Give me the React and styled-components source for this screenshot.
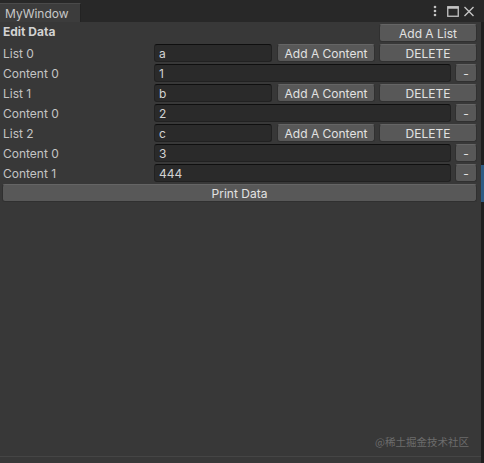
import React from 'react'
import styled, { createGlobalStyle } from 'styled-components'

const GlobalStyle = createGlobalStyle`
    html, body {
        margin: 0;
        padding: 0;
        background: #282828;
    }
    body {
        font-family: Inter, "Noto Sans", "Noto Sans CJK SC", sans-serif;
        font-size: 12px;
    }
`

const Window = styled.div`
    position: relative;
    width: 484px;
    height: 463px;
    display: flex;
    flex-direction: column;
    background: #383838;
    overflow: hidden;
`

const TabBar = styled.div`
    height: 22px;
    display: flex;
    align-items: flex-end;
    background: #282828;
`

const Tab = styled.div`
    width: 81px;
    height: 19px;
    box-sizing: border-box;
    padding: 0 5px;
    display: flex;
    align-items: center;
    background: #3c3c3c;
    border-top: 1px solid #4a4a4a;
    border-right: 1px solid #232323;
    color: #c8c8c8;
    font-size: 12px;
`

const TabIcons = styled.div`
    margin-left: auto;
    height: 22px;
    display: flex;
    align-items: center;
    padding-right: 9px;
    color: #c4c4c4;

    svg + svg {
        margin-left: ${p => p.$gap || 4}px;
    }
    svg:nth-child(2) {
        margin-left: 10px;
    }
`

const Body = styled.div`
    flex: 1;
    display: flex;
`

const Content = styled.div`
    flex: 1;
    padding: 2px 4px 0 2px;
    display: flex;
    flex-direction: column;
    gap: 2px;
    border-bottom: 1px solid #454545;
    margin-bottom: 6px;
`

const EdgeStrip = styled.div`
    width: 3px;
    background: #1f1f1f;
    padding-top: 143px;
`

const EdgeMark = styled.div`
    height: 37px;
    background: #2d5b84;
`

const Row = styled.div`
    height: 18px;
    display: flex;
    align-items: center;
    gap: 4px;
`

const Label = styled.div`
    width: 147px;
    padding-left: 1px;
    color: ${p => (p.$bold ? '#d2d2d2' : '#c4c4c4')};
    font-weight: ${p => (p.$bold ? 700 : 400)};
    white-space: nowrap;
    margin-top: ${p => (p.$bold ? '-3px' : '0')};
`

const Spacer = styled.div`
    flex: 1;
`

const Field = styled.div`
    flex: 1;
    height: 18px;
    box-sizing: border-box;
    display: flex;
    align-items: center;
    padding-left: 4px;
    background: #2a2a2a;
    border: 1px solid #212121;
    border-top-color: #0f0f0f;
    border-radius: 3px;
    color: #d2d2d2;
    margin-right: ${p => (p.$short ? '1px' : '0')};
`

const Button = styled.div`
    width: ${p => p.$w || 98}px;
    flex: ${p => (p.$grow ? 1 : 'none')};
    height: 18px;
    box-sizing: border-box;
    display: flex;
    align-items: center;
    justify-content: center;
    background: #585858;
    border: 1px solid #303030;
    border-top-color: #656565;
    border-radius: 3px;
    color: #e2e2e2;
    white-space: nowrap;
`

const Watermark = styled.div`
    position: absolute;
    right: 15px;
    bottom: 14px;
    color: #6c6c6c;
    font-size: 10.5px;
    font-family: "Noto Sans CJK SC", sans-serif;
`

const data = [
    { name: 'a', contents: ['1'] },
    { name: 'b', contents: ['2'] },
    { name: 'c', contents: ['3', '444'] },
]

export default function App() {
    return (
        <Window>
            <GlobalStyle />
            <TabBar>
                <Tab>MyWindow</Tab>
                <TabIcons>
                    <svg width="4" height="12" viewBox="0 0 4 12">
                        <circle cx="2" cy="2" r="1.3" fill="#c4c4c4" />
                        <circle cx="2" cy="6" r="1.3" fill="#c4c4c4" />
                        <circle cx="2" cy="10" r="1.3" fill="#c4c4c4" />
                    </svg>
                    <svg width="12" height="11" viewBox="0 0 12 11">
                        <rect x="0.75" y="0.75" width="10.5" height="9.5" fill="none" stroke="#c4c4c4" strokeWidth="1.3" />
                        <rect x="0.75" y="0.75" width="10.5" height="2" fill="#c4c4c4" />
                    </svg>
                    <svg width="12" height="11" viewBox="0 0 12 11">
                        <path d="M1.5 1 L10.5 10 M10.5 1 L1.5 10" stroke="#c4c4c4" strokeWidth="1.4" />
                    </svg>
                </TabIcons>
            </TabBar>
            <Body>
                <Content>
                    <Row>
                        <Label $bold>Edit Data</Label>
                        <Spacer />
                        <Button>Add A List</Button>
                    </Row>
                    {data.map((list, i) => (
                        <React.Fragment key={i}>
                            <Row>
                                <Label>List {i}</Label>
                                <Field $short>{list.name}</Field>
                                <Button>Add A Content</Button>
                                <Button>DELETE</Button>
                            </Row>
                            {list.contents.map((c, j) => (
                                <Row key={j}>
                                    <Label>Content {j}</Label>
                                    <Field>{c}</Field>
                                    <Button $w={22}>-</Button>
                                </Row>
                            ))}
                        </React.Fragment>
                    ))}
                    <Row>
                        <Button $grow>Print Data</Button>
                    </Row>
                </Content>
                <EdgeStrip>
                    <EdgeMark />
                </EdgeStrip>
            </Body>
            <Watermark>@稀土掘金技术社区</Watermark>
        </Window>
    )
}
